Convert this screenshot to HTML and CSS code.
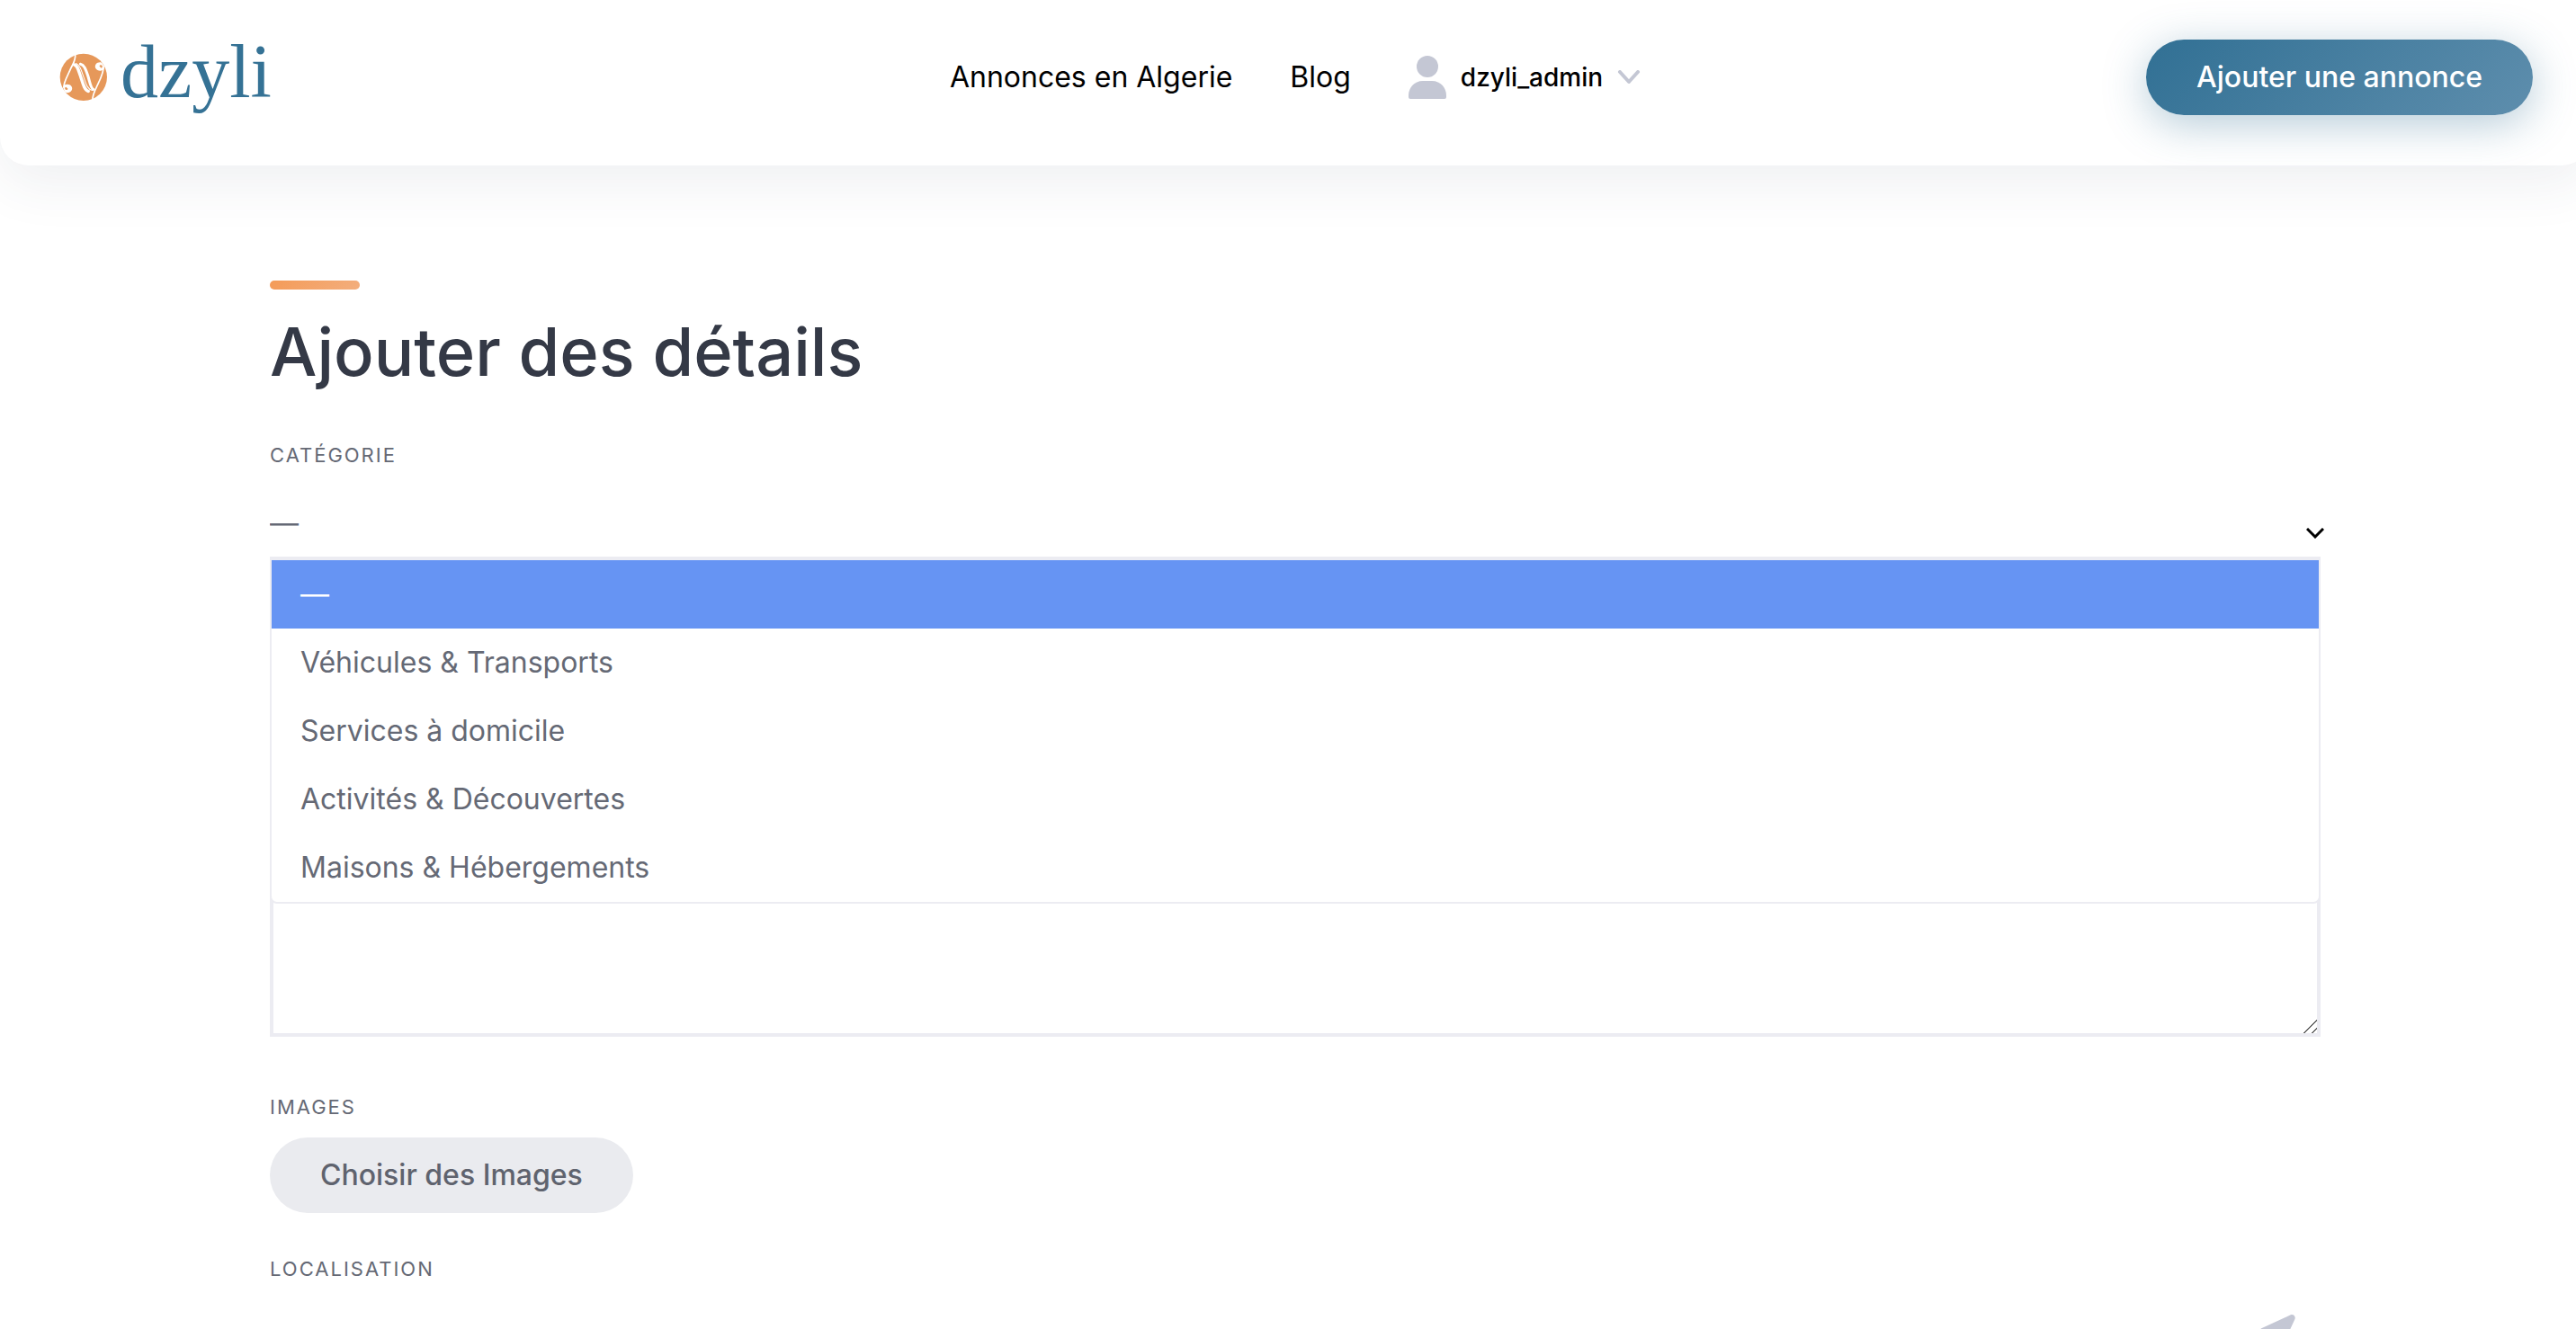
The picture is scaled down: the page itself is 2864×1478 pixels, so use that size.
FILE: index.html
```
<!DOCTYPE html>
<html lang="fr">

<head>
    <meta charset="UTF-8">
    <meta name="viewport" content="width=device-width, initial-scale=1.0">
    <title>Ajouter des détails</title>
    <link rel="stylesheet" href="styles.css">
</head>

<body>
    <div class="site">
        <header class="header">
            <a class="logo" href="#">
                <svg class="logo-mark" viewBox="198 183 159 159" aria-hidden="true">
                    <circle cx="277" cy="262" r="77" fill="#e6985a" />
                    <g fill="none" stroke="#fff" stroke-linecap="round">
                        <path stroke-width="5" d="M250 186C252 206 244 216 236 232C226 256 210 280 213 296" />
                        <path stroke-width="5" d="M342 226C345 246 330 272 319 296C310 314 307 326 306 338" />
                        <path stroke-width="10" d="M246 221C257 223 260 238 267 258C275 282 280 306 293 308" />
                        <path stroke-width="3" d="M252 217C266 222 270 240 277 260C286 286 290 302 306 305" />
                        <path stroke-width="9" d="M267 219C280 222 284 236 291 256C298 278 300 298 309 302" />
                    </g>
                    <path fill="#fff" fill-rule="evenodd" d="M210 292a16 14 0 1 1 14 21c-7 0-12-7-14-21zm10 2a5 5 0 1 0 6 6z" />
                    <path fill="#fff" fill-rule="evenodd" d="M345 234a16 14 0 1 1-14-21c7 0 12 7 14 21zm-10-2a5 5 0 1 0-6-6z" />
                </svg>
                <span class="logo-name">dzyli</span>
            </a>
            <nav class="nav">
                <a href="#">Annonces en Algerie</a>
                <a href="#">Blog</a>
                <a class="account" href="#">
                    <svg class="account-icon" viewBox="0 0 42 48" aria-hidden="true">
                        <circle cx="21" cy="12" r="12" />
                        <path d="M16 28h10c10 0 16 8 16 16v2a2 2 0 0 1-2 2H2a2 2 0 0 1-2-2v-2c0-8 6-16 16-16z" />
                    </svg>
                    <span>dzyli_admin</span>
                    <svg class="account-arrow" viewBox="0 0 26 16" aria-hidden="true">
                        <path d="M3 2l10 11L23 2" />
                    </svg>
                </a>
            </nav>
            <button class="button button-primary" type="button">Ajouter une annonce</button>
        </header>

        <main class="content">
            <h1 class="title">Ajouter des détails</h1>
            <form class="form">
                <div class="field">
                    <label for="category">Catégorie</label>
                    <div class="select">
                        <select id="category">
                            <option>—</option>
                        </select>
                        <svg class="select-arrow" viewBox="0 0 20 12" aria-hidden="true">
                            <path d="M1 1l9 9 9-9" />
                        </svg>
                        <ul class="options" role="listbox" aria-label="Catégorie">
                            <li class="option active" role="option" aria-selected="true">—</li>
                            <li class="option" role="option">Véhicules &amp; Transports</li>
                            <li class="option" role="option">Services à domicile</li>
                            <li class="option" role="option">Activités &amp; Découvertes</li>
                            <li class="option" role="option">Maisons &amp; Hébergements</li>
                        </ul>
                    </div>
                </div>
                <textarea class="description" aria-label="Description"></textarea>
                <div class="field field-images">
                    <label for="images">Images</label>
                    <button class="button" id="images" type="button">Choisir des Images</button>
                </div>
                <div class="field">
                    <label for="location">Localisation</label>
                    <div class="location">
                        <input type="text" id="location">
                        <svg class="location-icon" viewBox="0 0 512 512" aria-hidden="true">
                            <path d="M445 4L29 196c-48 22-32 92 16 92h176v176c0 48 70 64 92 16L505 64c16-38-22-76-60-60z" />
                        </svg>
                    </div>
                </div>
            </form>
        </main>
    </div>
</body>

</html>
```
FILE: styles.css
```
* {
    box-sizing: border-box;
}

body {
    margin: 0;
    overflow: hidden;
    font-family: Inter, sans-serif;
    font-size: 32px;
    line-height: 52px;
    font-optical-sizing: none;
    color: #656975;
    background-color: #fff;
}

.site {
    margin-right: -16px;
}

.header {
    display: grid;
    grid-template-columns: 1fr auto 1fr;
    align-items: center;
    height: 184px;
    padding: 0 64px 12px;
    border-radius: 0 0 32px 32px;
    background-color: #fff;
    box-shadow: 0 20px 60px rgba(45, 65, 95, 0.08);
}

.logo {
    display: flex;
    align-items: center;
    gap: 14px;
    padding-left: 2px;
    color: #357295;
    text-decoration: none;
}

.logo-mark {
    width: 54px;
    height: 54px;
}

.logo-name {
    padding-bottom: 12px;
    font-family: "Liberation Serif", serif;
    font-size: 84px;
    line-height: 100px;
}

.nav {
    display: flex;
    align-items: center;
    gap: 64px;
}

.nav a {
    color: #000;
    text-decoration: none;
}

.nav .account {
    display: flex;
    align-items: center;
    gap: 16px;
    font-size: 28px;
    font-weight: 500;
}

.account-icon {
    width: 42px;
    height: 48px;
    fill: #c4c7d4;
}

.account-arrow {
    width: 26px;
    height: 16px;
    fill: none;
    stroke: #c4c7d4;
    stroke-width: 4;
    stroke-linecap: round;
    stroke-linejoin: round;
}

.button {
    height: 84px;
    padding: 0 56px;
    border: 0;
    border-radius: 42px;
    font: inherit;
    font-weight: 500;
    color: #5f636e;
    background-color: #eaebef;
}

.button-primary {
    justify-self: end;
    color: #fff;
    background: linear-gradient(135deg, #317094, #5e8ead);
    box-shadow: 0 10px 48px rgba(49, 112, 148, 0.36);
}

.content {
    padding: 128px 300px 0;
}

.title {
    margin: 0 0 52px;
    font-size: 74px;
    font-weight: 500;
    line-height: 90px;
    color: #343946;
}

.title::before {
    content: "";
    display: block;
    width: 100px;
    height: 10px;
    margin-bottom: 24px;
    border-radius: 5px;
    background: linear-gradient(135deg, #f49b58, #f3ae7d);
}

.field label {
    display: block;
    font-size: 22px;
    line-height: 36px;
    letter-spacing: 2px;
    text-transform: uppercase;
}

.select {
    position: relative;
    margin-top: 20px;
}

.select select {
    display: block;
    width: 100%;
    height: 77px;
    padding: 0;
    border: 0;
    border-bottom: 2px solid #ececf2;
    appearance: none;
    font: inherit;
    color: inherit;
    background: none;
}

.select-arrow {
    position: absolute;
    top: 43px;
    right: -4px;
    width: 20px;
    height: 12px;
    fill: none;
    stroke: #000;
    stroke-width: 3;
}

.options {
    position: absolute;
    top: 100%;
    left: 0;
    right: 0;
    margin: 0;
    padding: 0;
    border: 2px solid #ececf2;
    border-radius: 0 0 8px 8px;
    list-style: none;
    background-color: #fff;
}

.option {
    padding: 12px 32px;
}

.option.active {
    color: #fff;
    background-color: #6694f3;
}

.description {
    display: block;
    width: 100%;
    height: 400px;
    margin: 132px 0 60px;
    border: 4px solid #ececf2;
    font: inherit;
}

.description::-webkit-resizer {
    background: linear-gradient(135deg, transparent 48%, #666 48%, #666 55%, transparent 55%, transparent 78%, #666 78%, #666 85%, transparent 85%);
}

.field-images {
    margin-bottom: 44px;
}

.field-images label {
    margin-bottom: 16px;
}

.location {
    display: flex;
    align-items: center;
    height: 108px;
    border-bottom: 2px solid #ececf2;
}

.location input {
    flex: 1;
    height: 100%;
    border: 0;
    font: inherit;
    background: none;
}

.location-icon {
    width: 40px;
    height: 40px;
    margin-right: 28px;
    fill: #c4c7d4;
}
```
